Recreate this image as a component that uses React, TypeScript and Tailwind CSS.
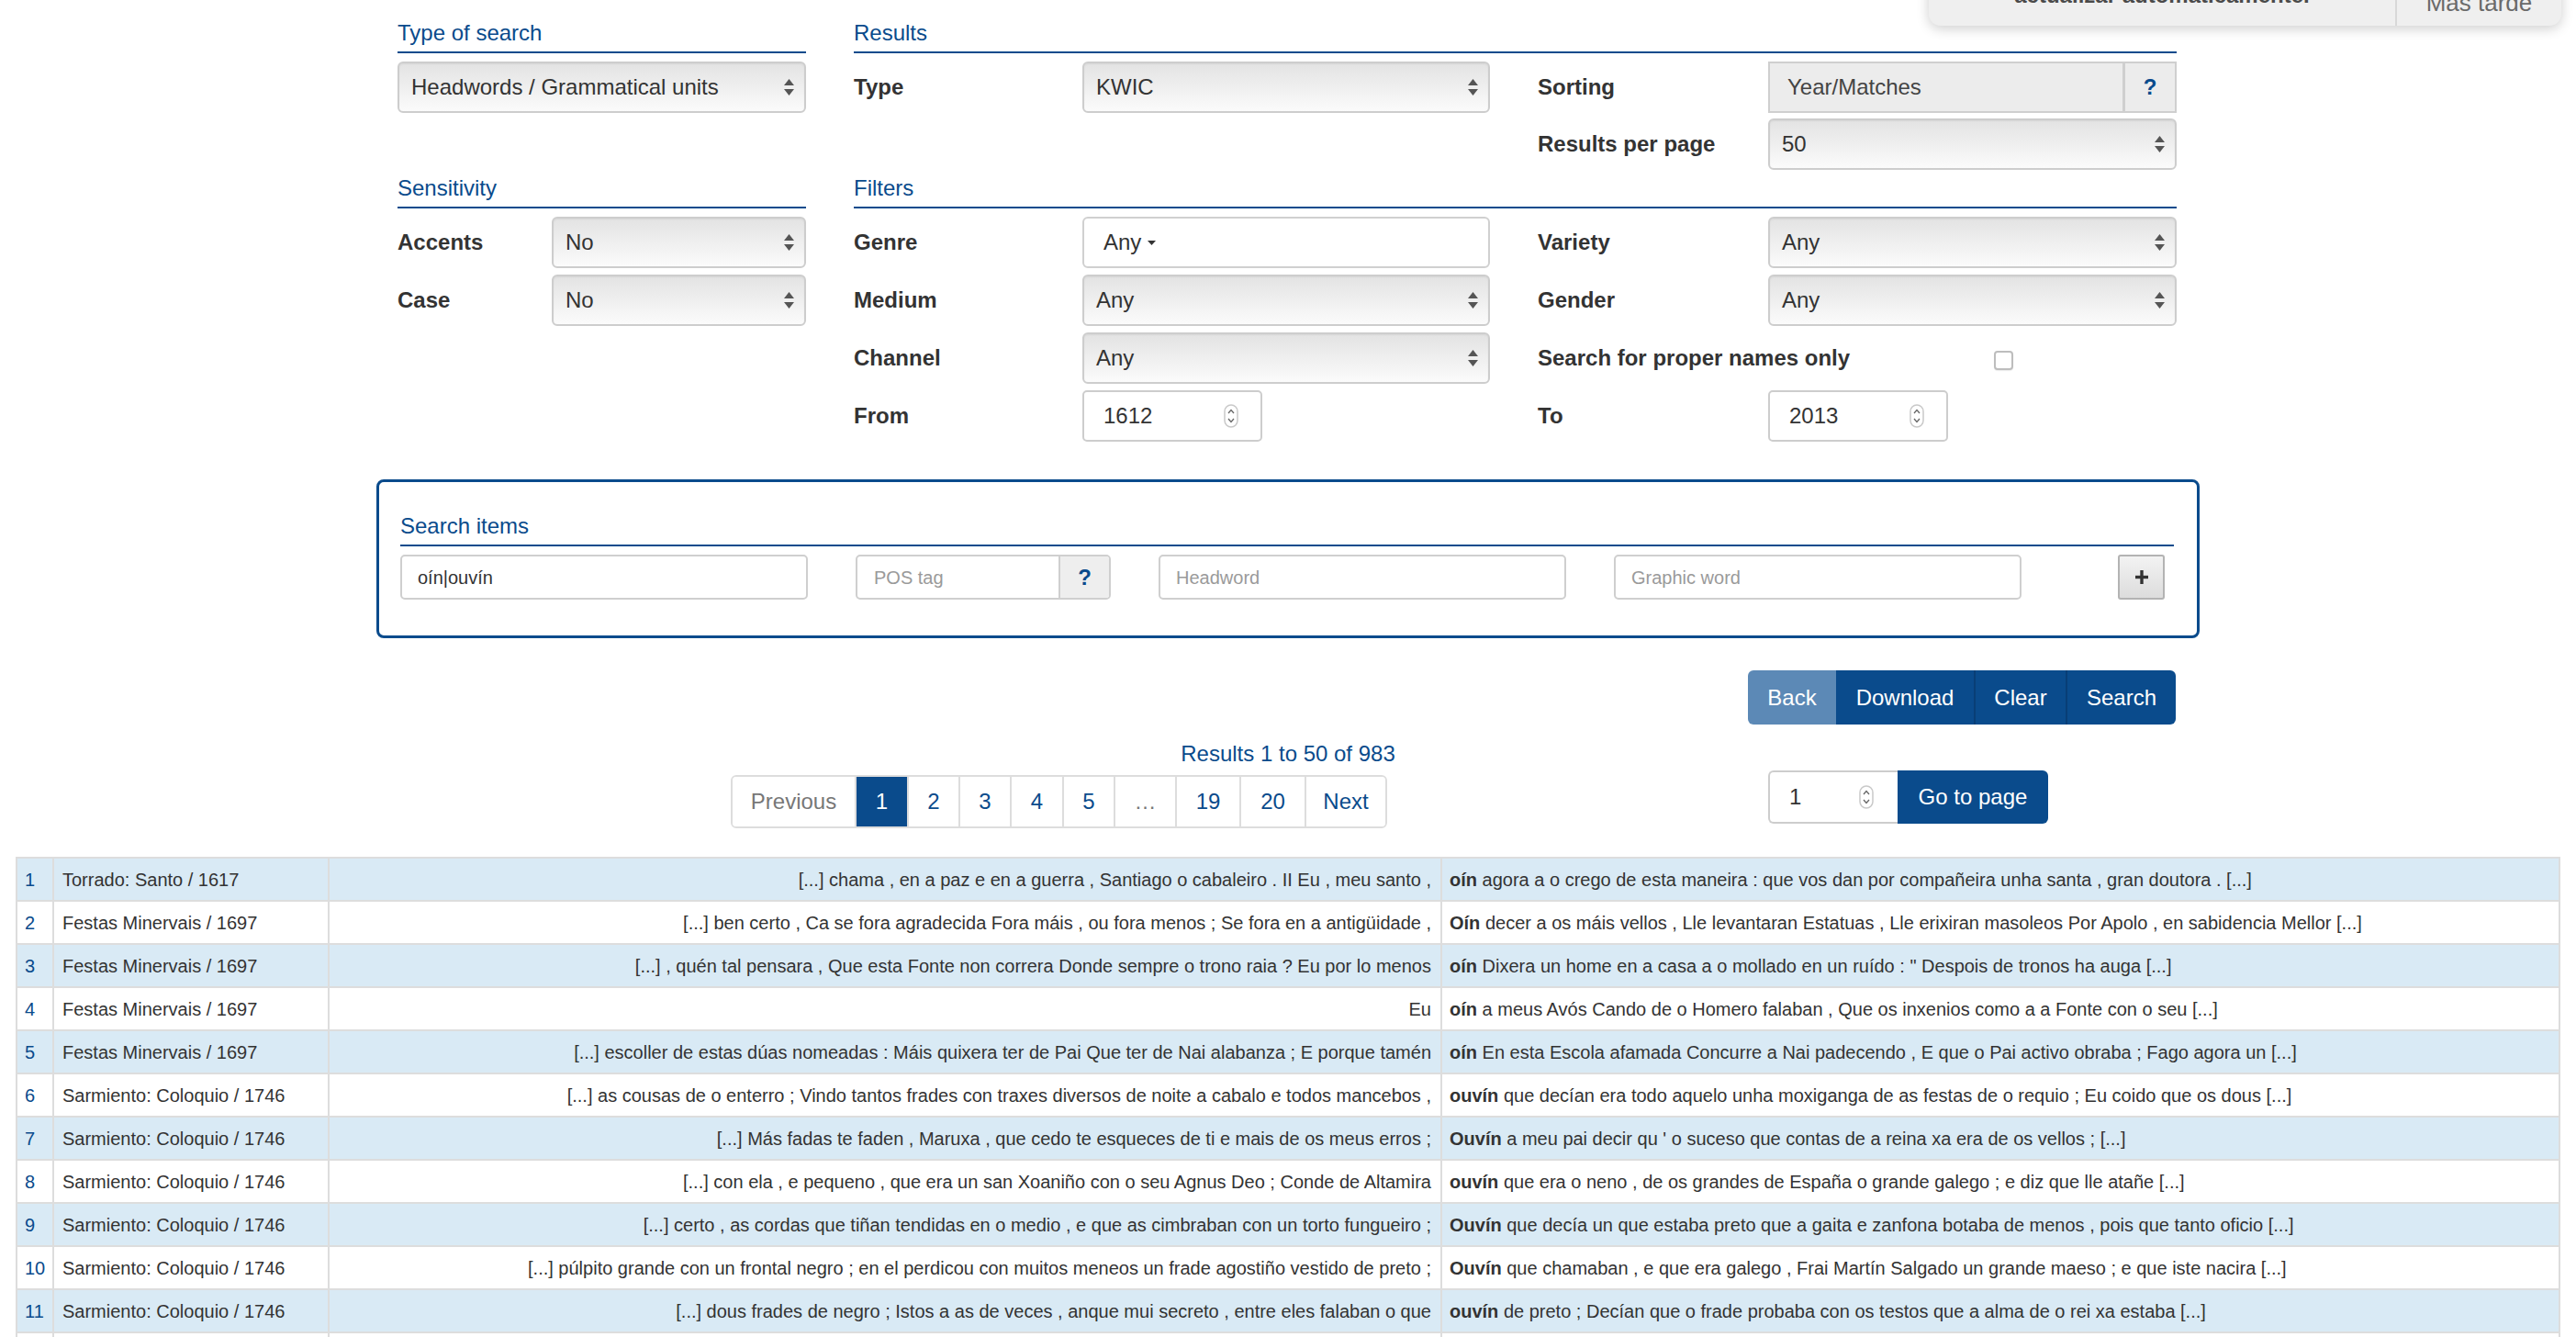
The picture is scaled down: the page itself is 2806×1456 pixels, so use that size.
import React from "react";

function SelectArrows() {
  return (
    <svg width="11" height="18" viewBox="0 0 11 18" className="shrink-0">
      <path d="M5.5 0 L11 7 L0 7 Z" fill="#555" />
      <path d="M0 11 L11 11 L5.5 18 Z" fill="#555" />
    </svg>
  );
}

function Spinner() {
  return (
    <svg width="16" height="26" viewBox="0 0 16 26" className="shrink-0">
      <rect x="1" y="1" width="14" height="24" rx="7" fill="#fff" stroke="#c9c9c9" strokeWidth="1.5" />
      <path d="M5 10 L8 6.5 L11 10" fill="none" stroke="#666" strokeWidth="1.3" />
      <path d="M5 16 L8 19.5 L11 16" fill="none" stroke="#666" strokeWidth="1.3" />
    </svg>
  );
}

function Select({ value }: { value: string }) {
  return (
    <div className="flex h-[56px] items-center justify-between rounded-[6px] border-2 border-[#cdcdcd] bg-linear-to-b from-[#e3e3e3] to-[#fbfbfb] pl-[13px] pr-[11px] text-[24px] text-[#333] shadow-[inset_0_1px_2px_rgba(0,0,0,0.06)]">
      <span className="whitespace-nowrap">{value}</span>
      <SelectArrows />
    </div>
  );
}

function Header({ children }: { children: React.ReactNode }) {
  return (
    <div className="border-b-2 border-[#0a4b8c] pb-[7px] text-[24px] leading-[26px] text-[#0a4b8c]">
      {children}
    </div>
  );
}

function Label({ children }: { children: React.ReactNode }) {
  return (
    <div className="flex h-[56px] items-center whitespace-nowrap text-[24px] font-bold text-[#333]">
      {children}
    </div>
  );
}

function NumberInput({ value }: { value: string }) {
  return (
    <div className="flex h-[56px] w-[196px] items-center justify-between rounded-[5px] border-2 border-[#cdcdcd] bg-white pl-[21px] pr-[24px] text-[24px] text-[#333]">
      <span>{value}</span>
      <Spinner />
    </div>
  );
}

function Caret() {
  return (
    <svg width="9" height="5" viewBox="0 0 9 5" className="ml-[7px]">
      <path d="M0 0 L9 0 L4.5 5 Z" fill="#333" />
    </svg>
  );
}

function TextInput({ text, placeholder }: { text?: string; placeholder?: string }) {
  return (
    <div className="flex h-[49px] w-[444px] items-center rounded-[5px] border-2 border-[#cfcfcf] bg-white pl-[17px] text-[20px]">
      {text ? <span className="text-[#333]">{text}</span> : <span className="text-[#9a9a9a]">{placeholder}</span>}
    </div>
  );
}

const rows: { src: string; left: string; kw: string; right: string }[] = [
  { src: "Torrado: Santo / 1617", left: "[...] chama , en a paz e en a guerra , Santiago o cabaleiro . II Eu , meu santo ,", kw: "oín", right: "agora a o crego de esta maneira : que vos dan por compañeira unha santa , gran doutora . [...]" },
  { src: "Festas Minervais / 1697", left: "[...] ben certo , Ca se fora agradecida Fora máis , ou fora menos ; Se fora en a antigüidade ,", kw: "Oín", right: "decer a os máis vellos , Lle levantaran Estatuas , Lle erixiran masoleos Por Apolo , en sabidencia Mellor [...]" },
  { src: "Festas Minervais / 1697", left: "[...] , quén tal pensara , Que esta Fonte non correra Donde sempre o trono raia ? Eu por lo menos", kw: "oín", right: "Dixera un home en a casa a o mollado en un ruído : \" Despois de tronos ha auga [...]" },
  { src: "Festas Minervais / 1697", left: "Eu", kw: "oín", right: "a meus Avós Cando de o Homero falaban , Que os inxenios como a a Fonte con o seu [...]" },
  { src: "Festas Minervais / 1697", left: "[...] escoller de estas dúas nomeadas : Máis quixera ter de Pai Que ter de Nai alabanza ; E porque tamén", kw: "oín", right: "En esta Escola afamada Concurre a Nai padecendo , E que o Pai activo obraba ; Fago agora un [...]" },
  { src: "Sarmiento: Coloquio / 1746", left: "[...] as cousas de o enterro ; Vindo tantos frades con traxes diversos de noite a cabalo e todos mancebos ,", kw: "ouvín", right: "que decían era todo aquelo unha moxiganga de as festas de o requio ; Eu coido que os dous [...]" },
  { src: "Sarmiento: Coloquio / 1746", left: "[...] Más fadas te faden , Maruxa , que cedo te esqueces de ti e mais de os meus erros ;", kw: "Ouvín", right: "a meu pai decir qu ' o suceso que contas de a reina xa era de os vellos ; [...]" },
  { src: "Sarmiento: Coloquio / 1746", left: "[...] con ela , e pequeno , que era un san Xoaniño con o seu Agnus Deo ; Conde de Altamira", kw: "ouvín", right: "que era o neno , de os grandes de España o grande galego ; e diz que lle atañe [...]" },
  { src: "Sarmiento: Coloquio / 1746", left: "[...] certo , as cordas que tiñan tendidas en o medio , e que as cimbraban con un torto fungueiro ;", kw: "Ouvín", right: "que decía un que estaba preto que a gaita e zanfona botaba de menos , pois que tanto oficio [...]" },
  { src: "Sarmiento: Coloquio / 1746", left: "[...] púlpito grande con un frontal negro ; en el perdicou con muitos meneos un frade agostiño vestido de preto ;", kw: "Ouvín", right: "que chamaban , e que era galego , Frai Martín Salgado un grande maeso ; e que iste nacira [...]" },
  { src: "Sarmiento: Coloquio / 1746", left: "[...] dous frades de negro ; Istos a as de veces , anque mui secreto , entre eles falaban o que", kw: "ouvín", right: "de preto ; Decían que o frade probaba con os testos que a alma de o rei xa estaba [...]" },
  { src: "Sarmiento: Coloquio / 1746", left: "[...] de o rei xa estaba en o ceo , e que o", kw: "ouvín", right: "dicir a un frade [...]" },
];

const pages: { label: string; w: string; kind: "prev" | "active" | "link" | "dots" }[] = [
  { label: "Previous", w: "w-[133px]", kind: "prev" },
  { label: "1", w: "w-[57px]", kind: "active" },
  { label: "2", w: "w-[56px]", kind: "link" },
  { label: "3", w: "w-[56px]", kind: "link" },
  { label: "4", w: "w-[57px]", kind: "link" },
  { label: "5", w: "w-[56px]", kind: "link" },
  { label: "…", w: "w-[67px]", kind: "dots" },
  { label: "19", w: "w-[70px]", kind: "link" },
  { label: "20", w: "w-[71px]", kind: "link" },
  { label: "Next", w: "w-[88px]", kind: "link" },
];

export default function App() {
  return (
    <div className="relative min-h-[1456px] w-full overflow-hidden bg-white font-['Liberation_Sans',Arial,sans-serif] text-[#333]">
      {/* notification popup (partially off-screen) */}
      <div className="absolute left-[2101px] top-[-72px] flex h-[100px] w-[689px] overflow-hidden rounded-b-[13px] bg-[#efefef] shadow-[0_3px_14px_rgba(0,0,0,0.2)]">
        <div className="flex w-[508px] items-end justify-center pb-[18px] text-[24px] font-bold leading-[30px] text-[#4a4a4a]">
          actualizar automaticamente.
        </div>
        <div className="flex flex-1 items-end justify-center border-l-2 border-[#d8d8d8] pb-[10px] text-[26px] leading-[30px] text-[#6a6a6a]">
          Más tarde
        </div>
      </div>

      <div className="mx-auto w-[1986px]">
        {/* form */}
        <div className="pl-[23px] pr-[25px]">
          {/* section 1 */}
          <div className="flex gap-[52px] pt-[23px]">
            <div className="w-[445px]">
              <Header>Type of search</Header>
              <div className="mt-[9px]">
                <Select value="Headwords / Grammatical units" />
              </div>
            </div>
            <div className="w-[1441px]">
              <Header>Results</Header>
              <div className="mt-[9px] grid grid-cols-[249px_444px_52px_251px_445px] gap-y-[6px]">
                <Label>Type</Label>
                <Select value="KWIC" />
                <div />
                <Label>Sorting</Label>
                <div className="flex h-[56px] border-2 border-[#cfcfcf] bg-[#ececec]">
                  <div className="flex flex-1 items-center pl-[19px] text-[24px] text-[#444]">Year/Matches</div>
                  <div className="flex w-[57px] items-center justify-center border-l-[3px] border-[#cfcfcf] text-[24px] font-bold text-[#0a4b8c]">
                    ?
                  </div>
                </div>
                <div />
                <div />
                <div />
                <Label>Results per page</Label>
                <Select value="50" />
              </div>
            </div>
          </div>

          {/* section 2 */}
          <div className="mt-[7px] flex gap-[52px]">
            <div className="w-[445px]">
              <Header>Sensitivity</Header>
              <div className="mt-[9px] grid grid-cols-[168px_277px] gap-y-[7px]">
                <Label>Accents</Label>
                <Select value="No" />
                <Label>Case</Label>
                <Select value="No" />
              </div>
            </div>
            <div className="w-[1441px]">
              <Header>Filters</Header>
              <div className="mt-[9px] grid grid-cols-[249px_444px_52px_251px_445px] gap-y-[7px]">
                <Label>Genre</Label>
                <div className="flex h-[56px] items-center rounded-[6px] border-2 border-[#d0d0d0] bg-white pl-[21px] text-[24px] text-[#333]">
                  Any
                  <Caret />
                </div>
                <div />
                <Label>Variety</Label>
                <Select value="Any" />

                <Label>Medium</Label>
                <Select value="Any" />
                <div />
                <Label>Gender</Label>
                <Select value="Any" />

                <Label>Channel</Label>
                <Select value="Any" />
                <div />
                <Label>Search for proper names only</Label>
                <div className="flex h-[56px] items-center pl-[246px] pt-[5px]">
                  <div className="h-[21px] w-[21px] rounded-[4px] border-2 border-[#bdbdbd] bg-white shadow-[0_1px_1px_rgba(0,0,0,0.08)]" />
                </div>

                <Label>From</Label>
                <NumberInput value="1612" />
                <div />
                <Label>To</Label>
                <NumberInput value="2013" />
              </div>
            </div>
          </div>
        </div>

        {/* search items box */}
        <div className="mt-[41px] rounded-[8px] border-[3px] border-[#0a4b8c] pb-[39px] pl-[23px] pr-[25px] pt-[35px]">
          <Header>Search items</Header>
          <div className="mt-[9px] flex items-center">
            <TextInput text="oín|ouvín" />
            <div className="ml-[52px] flex h-[49px] w-[278px] overflow-hidden rounded-[5px] border-2 border-[#cfcfcf] bg-white">
              <div className="flex flex-1 items-center pl-[18px] text-[20px] text-[#9a9a9a]">POS tag</div>
              <div className="flex w-[55px] items-center justify-center border-l-2 border-[#cfcfcf] bg-[#eeeeee] text-[24px] font-bold text-[#0a4b8c]">
                ?
              </div>
            </div>
            <div className="ml-[52px]">
              <TextInput placeholder="Headword" />
            </div>
            <div className="ml-[52px]">
              <TextInput placeholder="Graphic word" />
            </div>
            <div className="ml-auto mr-[10px] flex h-[49px] w-[51px] items-center justify-center rounded-[3px] border-2 border-[#b3b3b3] bg-linear-to-b from-[#f3f3f3] to-[#dcdcdc]">
              <svg width="14" height="15" viewBox="0 0 14 15">
                <rect x="5.3" y="0" width="3.4" height="15" fill="#333" />
                <rect x="0" y="5.8" width="14" height="3.4" fill="#333" />
              </svg>
            </div>
          </div>
        </div>

        {/* action buttons */}
        <div className="mt-[35px] flex justify-end pl-[23px] pr-[26px]">
          <div className="flex h-[59px] overflow-hidden rounded-[6px] text-[24px] text-white">
            <div className="flex w-[96px] items-center justify-center bg-[#5c89b6]">Back</div>
            <div className="flex w-[150px] items-center justify-center bg-[#0a4b8c]">Download</div>
            <div className="flex w-[100px] items-center justify-center border-l-2 border-[#083e76] bg-[#0a4b8c]">Clear</div>
            <div className="flex w-[120px] items-center justify-center border-l-2 border-[#083e76] bg-[#0a4b8c]">Search</div>
          </div>
        </div>

        {/* results count */}
        <div className="mt-[19px] text-center text-[24px] leading-[26px] text-[#0a4b8c]">Results 1 to 50 of 983</div>

        {/* pagination + go to page */}
        <div className="mt-[5px] flex items-start pl-[23px]">
          <div className="ml-[363px] mt-[5px] flex h-[58px] overflow-hidden rounded-[6px] border-2 border-[#dddddd] text-[24px]">
            {pages.map((p, i) => (
              <div
                key={p.label}
                className={
                  "flex items-center justify-center " +
                  p.w +
                  (i > 0 ? " border-l-2 border-[#dddddd]" : "") +
                  (p.kind === "active"
                    ? " border-[#0a4b8c] bg-[#0a4b8c] text-white"
                    : p.kind === "prev" || p.kind === "dots"
                    ? " bg-white text-[#777]"
                    : " bg-white text-[#0a4b8c]")
                }
              >
                {p.label}
              </div>
            ))}
          </div>
          <div className="ml-[415px] flex h-[58px]">
            <div className="flex w-[141px] items-center justify-between rounded-l-[6px] border-2 border-r-0 border-[#cdcdcd] bg-white pl-[21px] pr-[26px] text-[24px] text-[#333]">
              <span>1</span>
              <Spinner />
            </div>
            <div className="flex w-[164px] items-center justify-center rounded-r-[6px] bg-[#0a4b8c] text-[24px] text-white">
              Go to page
            </div>
          </div>
        </div>
      </div>

      {/* results table */}
      <div className="ml-[17px] mt-[31px] w-[2772px] border-x-2 border-t-2 border-[#dddddd] text-[20px] text-[#333]">
        {rows.map((r, i) => (
          <div
            key={i}
            className={
              "grid h-[47px] grid-cols-[40px_300px_1212px_1216px] border-b-2 border-[#dddddd] " +
              (i % 2 === 0 ? "bg-[#d9eaf5]" : "bg-white")
            }
          >
            <div className="flex items-center border-r-2 border-[#dddddd] pl-[8px] text-[#0a4b8c]">{i + 1}</div>
            <div className="flex items-center whitespace-nowrap border-r-2 border-[#dddddd] pl-[9px]">{r.src}</div>
            <div className="flex items-center justify-end overflow-hidden whitespace-nowrap border-r-2 border-[#dddddd] pr-[10px]">
              {r.left}
            </div>
            <div className="flex items-center overflow-hidden whitespace-nowrap pl-[8px]">
              <span className="font-bold">{r.kw}</span>
              <span>&nbsp;{r.right}</span>
            </div>
          </div>
        ))}
      </div>
    </div>
  );
}
